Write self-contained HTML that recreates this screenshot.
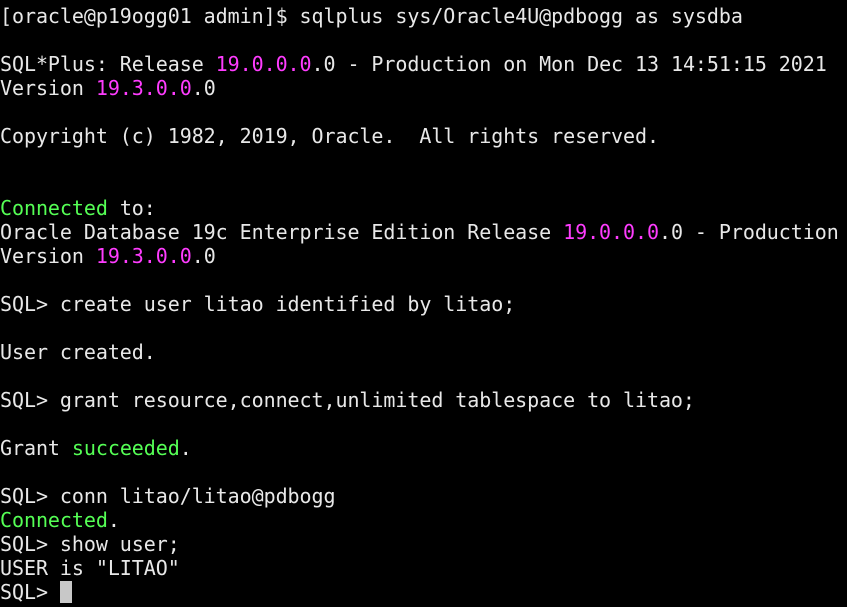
<!DOCTYPE html>
<html><head><meta charset="utf-8"><style>
html,body{margin:0;padding:0;background:#000;width:847px;height:607px;overflow:hidden}
pre{margin:0;padding:4px 0 0 0;font-family:"DejaVu Sans Mono","Liberation Mono",monospace;font-size:20px;letter-spacing:-0.06px;line-height:24px;color:#e8e8e8;white-space:pre}
.m{color:#ff3cff}.g{color:#55ff55}
.c{display:inline-block;width:12px;height:22px;background:#c8c8c8;vertical-align:-4px}
</style></head><body><pre>[oracle@p19ogg01 admin]$ sqlplus sys/Oracle4U@pdbogg as sysdba

SQL*Plus: Release <span class="m">19.0.0.0</span>.0 - Production on Mon Dec 13 14:51:15 2021
Version <span class="m">19.3.0.0</span>.0

Copyright (c) 1982, 2019, Oracle.  All rights reserved.


<span class="g">Connected</span> to:
Oracle Database 19c Enterprise Edition Release <span class="m">19.0.0.0</span>.0 - Production
Version <span class="m">19.3.0.0</span>.0

SQL&gt; create user litao identified by litao;

User created.

SQL&gt; grant resource,connect,unlimited tablespace to litao;

Grant <span class="g">succeeded</span>.

SQL&gt; conn litao/litao@pdbogg
<span class="g">Connected</span>.
SQL&gt; show user;
USER is "LITAO"
SQL&gt; <span class="c"></span></pre></body></html>
